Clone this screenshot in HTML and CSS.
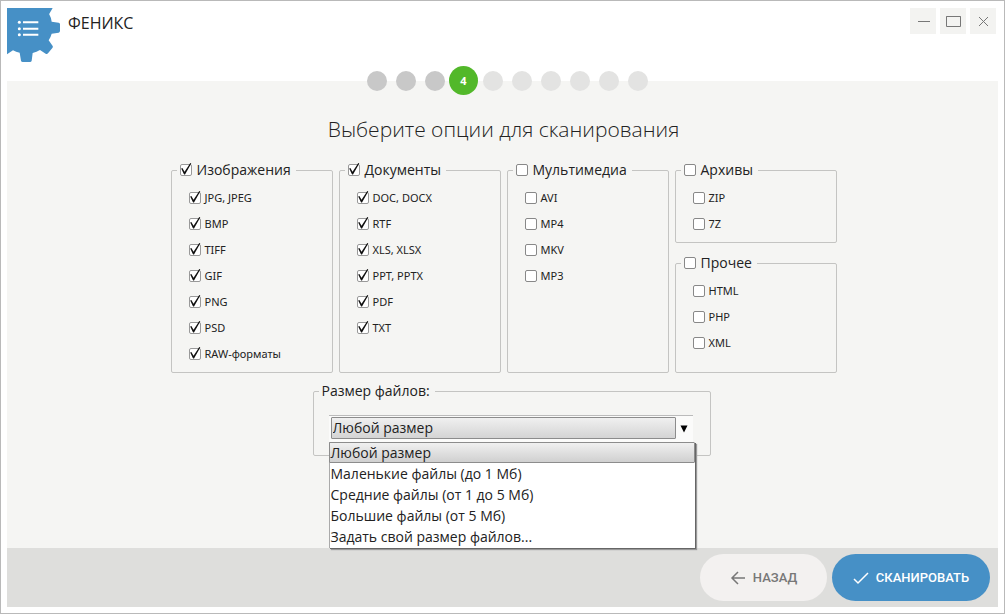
FILE: index.html
```html
<!DOCTYPE html>
<html lang="ru">
<head>
<meta charset="utf-8">
<meta name="viewport" content="width=device-width, initial-scale=1">
<title>Феникс</title>
<link rel="stylesheet" href="styles.css">
</head>
<body>
<div class="window">
  <header class="header">
    <svg class="logo" viewBox="21 24 159 162" aria-hidden="true">
      <path fill="#4690c6" d="M21 24H158L148 41Q147 43 149 46Q154 54 155 65L176 68Q180 69 180 73V92Q180 97 176 98L155 101Q152 112 146 121L158 138Q160 141 157 144L144 160Q141 163 137 161L120 150Q110 156 98 159L95 182Q94 186 90 186H68Q64 186 63 182L59 158Q48 156 39 151L21 163Z"/>
      <g fill="#fff"><circle cx="58" cy="67" r="4.500"/><circle cx="58" cy="86" r="4.500"/><circle cx="58" cy="104" r="4.500"/><path d="M69 64h46v6H69zM69 83h46v6H69zM69 101h46v6H69z"/></g>
    </svg>
    <h1 class="app-name">ФЕНИКС</h1>
    <div class="window-controls">
      <button class="window-button" type="button" aria-label="Свернуть"><svg viewBox="0 0 26 26"><path d="M8 13.500h12"/></svg></button>
      <button class="window-button" type="button" aria-label="Развернуть"><svg viewBox="0 0 26 26"><path d="M6.500 8.500h14v10h-14zM6.500 8.500h14"/></svg></button>
      <button class="window-button" type="button" aria-label="Закрыть"><svg viewBox="0 0 26 26"><path d="M9 9l9 9M18 9l-9 9"/></svg></button>
    </div>
  </header>

  <main class="main">
    <ol class="steps">
      <li class="step step-done"></li>
      <li class="step step-done"></li>
      <li class="step step-done"></li>
      <li class="step step-current" aria-current="step">4</li>
      <li class="step"></li>
      <li class="step"></li>
      <li class="step"></li>
      <li class="step"></li>
      <li class="step"></li>
      <li class="step"></li>
    </ol>
    <h2 class="title">Выберите опции для сканирования</h2>

    <form class="options" id="scan-form">
      <div class="groups">
        <fieldset class="group group-tall">
          <legend class="legend"><label class="check"><input type="checkbox" checked>Изображения</label></legend>
          <label class="check item"><input type="checkbox" checked>JPG, JPEG</label>
          <label class="check item"><input type="checkbox" checked>BMP</label>
          <label class="check item"><input type="checkbox" checked>TIFF</label>
          <label class="check item"><input type="checkbox" checked>GIF</label>
          <label class="check item"><input type="checkbox" checked>PNG</label>
          <label class="check item"><input type="checkbox" checked>PSD</label>
          <label class="check item"><input type="checkbox" checked>RAW-форматы</label>
        </fieldset>
        <fieldset class="group group-tall">
          <legend class="legend"><label class="check"><input type="checkbox" checked>Документы</label></legend>
          <label class="check item"><input type="checkbox" checked>DOC, DOCX</label>
          <label class="check item"><input type="checkbox" checked>RTF</label>
          <label class="check item"><input type="checkbox" checked>XLS, XLSX</label>
          <label class="check item"><input type="checkbox" checked>PPT, PPTX</label>
          <label class="check item"><input type="checkbox" checked>PDF</label>
          <label class="check item"><input type="checkbox" checked>TXT</label>
        </fieldset>
        <fieldset class="group group-tall">
          <legend class="legend"><label class="check"><input type="checkbox">Мультимедиа</label></legend>
          <label class="check item"><input type="checkbox">AVI</label>
          <label class="check item"><input type="checkbox">MP4</label>
          <label class="check item"><input type="checkbox">MKV</label>
          <label class="check item"><input type="checkbox">MP3</label>
        </fieldset>
        <div class="stack">
          <fieldset class="group group-tall">
            <legend class="legend"><label class="check"><input type="checkbox">Архивы</label></legend>
            <label class="check item"><input type="checkbox">ZIP</label>
            <label class="check item"><input type="checkbox">7Z</label>
          </fieldset>
          <fieldset class="group group-tall group-fill">
            <legend class="legend"><label class="check"><input type="checkbox">Прочее</label></legend>
            <label class="check item"><input type="checkbox">HTML</label>
            <label class="check item"><input type="checkbox">PHP</label>
            <label class="check item"><input type="checkbox">XML</label>
          </fieldset>
        </div>
      </div>

      <fieldset class="group size-group">
        <legend class="legend"><label for="file-size">Размер файлов:</label></legend>
        <div class="combo">
          <select class="combo-select" id="file-size">
            <option>Любой размер</option>
            <option>Маленькие файлы (до 1 Мб)</option>
            <option>Средние файлы (от 1 до 5 Мб)</option>
            <option>Большие файлы (от 5 Мб)</option>
            <option>Задать свой размер файлов...</option>
          </select>
          <svg class="combo-arrow" viewBox="0 0 18 20" aria-hidden="true"><path d="M5.500 7.500h7l-3.500 7z"/></svg>
          <ul class="menu" role="listbox" aria-label="Размер файлов">
            <li class="menu-item menu-item-active" role="option" aria-selected="true">Любой размер</li>
            <li class="menu-item" role="option">Маленькие файлы (до 1 Мб)</li>
            <li class="menu-item" role="option">Средние файлы (от 1 до 5 Мб)</li>
            <li class="menu-item" role="option">Большие файлы (от 5 Мб)</li>
            <li class="menu-item" role="option">Задать свой размер файлов...</li>
          </ul>
        </div>
      </fieldset>
    </form>
  </main>

  <footer class="footer">
    <button class="button button-back" type="button"><svg viewBox="0 0 16 16" aria-hidden="true"><path d="M15 8H2M8 2L2 8l6 6"/></svg>НАЗАД</button>
    <button class="button button-scan" type="submit" form="scan-form"><svg viewBox="0 0 16 16" aria-hidden="true"><path d="M1 9l4 4L15 3"/></svg>СКАНИРОВАТЬ</button>
  </footer>
</div>
</body>
</html>
```
FILE: styles.css
```css
* {
  box-sizing: border-box;
}

body {
  margin: 0;
  font-family: "Open Sans", "Noto Sans", sans-serif;
  color: #222;
}

.window {
  display: flex;
  flex-direction: column;
  min-height: 100vh;
  padding: 6px;
  border: 1px solid #b9b9b9;
  background: #fff;
}

.header {
  display: flex;
  align-items: flex-start;
  height: 74px;
  padding: 1px 2px 0 0;
}

.logo {
  width: 53px;
  height: 54px;
}

.app-name {
  margin: 3px 0 0 8px;
  font-size: 16px;
  line-height: 24px;
  font-weight: 400;
}

.window-controls {
  display: flex;
  gap: 4px;
  margin-left: auto;
}

.window-button {
  width: 26px;
  height: 26px;
  padding: 0;
  border: 0;
  background: #f3f3f1;
}

.window-button svg {
  display: block;
  width: 26px;
  height: 26px;
  fill: none;
  stroke: #777;
}

.main {
  display: flex;
  flex: 1;
  flex-direction: column;
  align-items: center;
  padding-left: 2px;
  background: #f5f5f3;
}

.steps {
  display: flex;
  margin: -15px 0 0;
  padding: 0 0 0 7px;
  list-style: none;
}

.step {
  display: flex;
  align-items: center;
  justify-content: center;
  width: 29px;
  height: 29px;
}

.step::before {
  width: 20px;
  height: 20px;
  border-radius: 50%;
  background: #e3e3e2;
  content: "";
}

.step-done::before {
  background: #c8c8c8;
}

.step-current {
  border-radius: 50%;
  background: #52b82a;
  color: #fff;
  font-size: 11px;
  font-weight: 700;
}

.step-current::before {
  content: none;
}

.title {
  margin: 19px 0 15px;
  font-size: 21px;
  line-height: 30px;
  font-weight: 300;
}

.groups {
  display: grid;
  grid-template-columns: repeat(4, 162px);
  gap: 6px;
}

.group {
  min-width: 0;
  margin: 0;
  padding: 0 5px;
  border: 1px solid #c4c4c2;
  border-radius: 2px;
}

.group-tall {
  padding-top: 4px;
  padding-bottom: 5px;
}

.stack {
  display: flex;
  flex-direction: column;
  gap: 9px;
}

.group-fill {
  flex: 1;
}

.legend {
  padding: 0 5px 0 3px;
  font-size: 14px;
  line-height: 22px;
}

.check {
  display: flex;
  align-items: center;
  gap: 5px;
}

.check input {
  flex: none;
  width: 12px;
  height: 12px;
  margin: 0;
  border: 1px solid #888;
  border-radius: 2px;
  background: #fff;
  appearance: none;
}

.check input:checked {
  border-color: #999;
}

.check input:checked::before {
  display: block;
  width: 12px;
  height: 12px;
  margin: -2px 0 0 -1px;
  background: #111;
  clip-path: polygon(14% 46%, 24% 41%, 42% 72%, 90% 0, 98% 4%, 46% 96%, 38% 96%);
  content: "";
}

.item {
  gap: 4px;
  padding-left: 12px;
  font-family: "Noto Sans", "Open Sans", sans-serif;
  font-size: 11px;
  line-height: 26px;
}

.size-group {
  width: 398px;
  margin: 7px 0 0 142px;
  padding: 13px 17px 13px 15px;
}

.size-group .legend {
  margin-left: -10px;
}

.combo {
  position: relative;
  height: 27px;
  padding: 1px 17px 3px 2px;
  border-top: 1px solid #bbb;
  background: #fbfbfa;
}

.combo-select {
  display: block;
  width: 100%;
  height: 22px;
  padding: 0 1px;
  border: 1px solid #8c8c8c;
  border-radius: 1px;
  background: linear-gradient(#f0f0f0, #d4d4d4);
  color: #222;
  font-family: inherit;
  font-size: 14px;
  line-height: 20px;
  appearance: none;
}

.combo-arrow {
  position: absolute;
  top: 2px;
  right: 0;
  width: 18px;
  height: 20px;
  pointer-events: none;
}

.menu {
  position: absolute;
  top: 100%;
  right: -2px;
  left: 0;
  margin: 0;
  padding: 0 0 1px;
  border-left: 1px solid #aaa;
  background: #fff;
  box-shadow: 1px 1px 0 #666, 2px 2px 1px #999;
  list-style: none;
}

.menu-item {
  padding-left: 1px;
  font-size: 14px;
  line-height: 21px;
}

.menu-item-active {
  margin-left: -1px;
  padding-left: 1px;
  border: 1px solid #8c8c8c;
  border-radius: 1px;
  background: linear-gradient(#f0f0f0, #d0d0d0);
  line-height: 19px;
}

.footer {
  display: flex;
  align-items: center;
  justify-content: flex-end;
  gap: 5px;
  padding: 6px 8px;
  background: #dededc;
}

.button {
  display: flex;
  align-items: center;
  justify-content: center;
  gap: 7px;
  height: 47px;
  border: 0;
  border-radius: 24px;
  font-family: Roboto, sans-serif;
  font-size: 13px;
  font-weight: 500;
}

.button svg {
  width: 16px;
  height: 16px;
  fill: none;
  stroke: currentColor;
  stroke-width: 1.500;
}

.button-back {
  width: 127px;
  background: #f3f1f0;
  color: #777;
}

.button-scan {
  width: 158px;
  background: #4690c6;
  color: #fff;
}
```
